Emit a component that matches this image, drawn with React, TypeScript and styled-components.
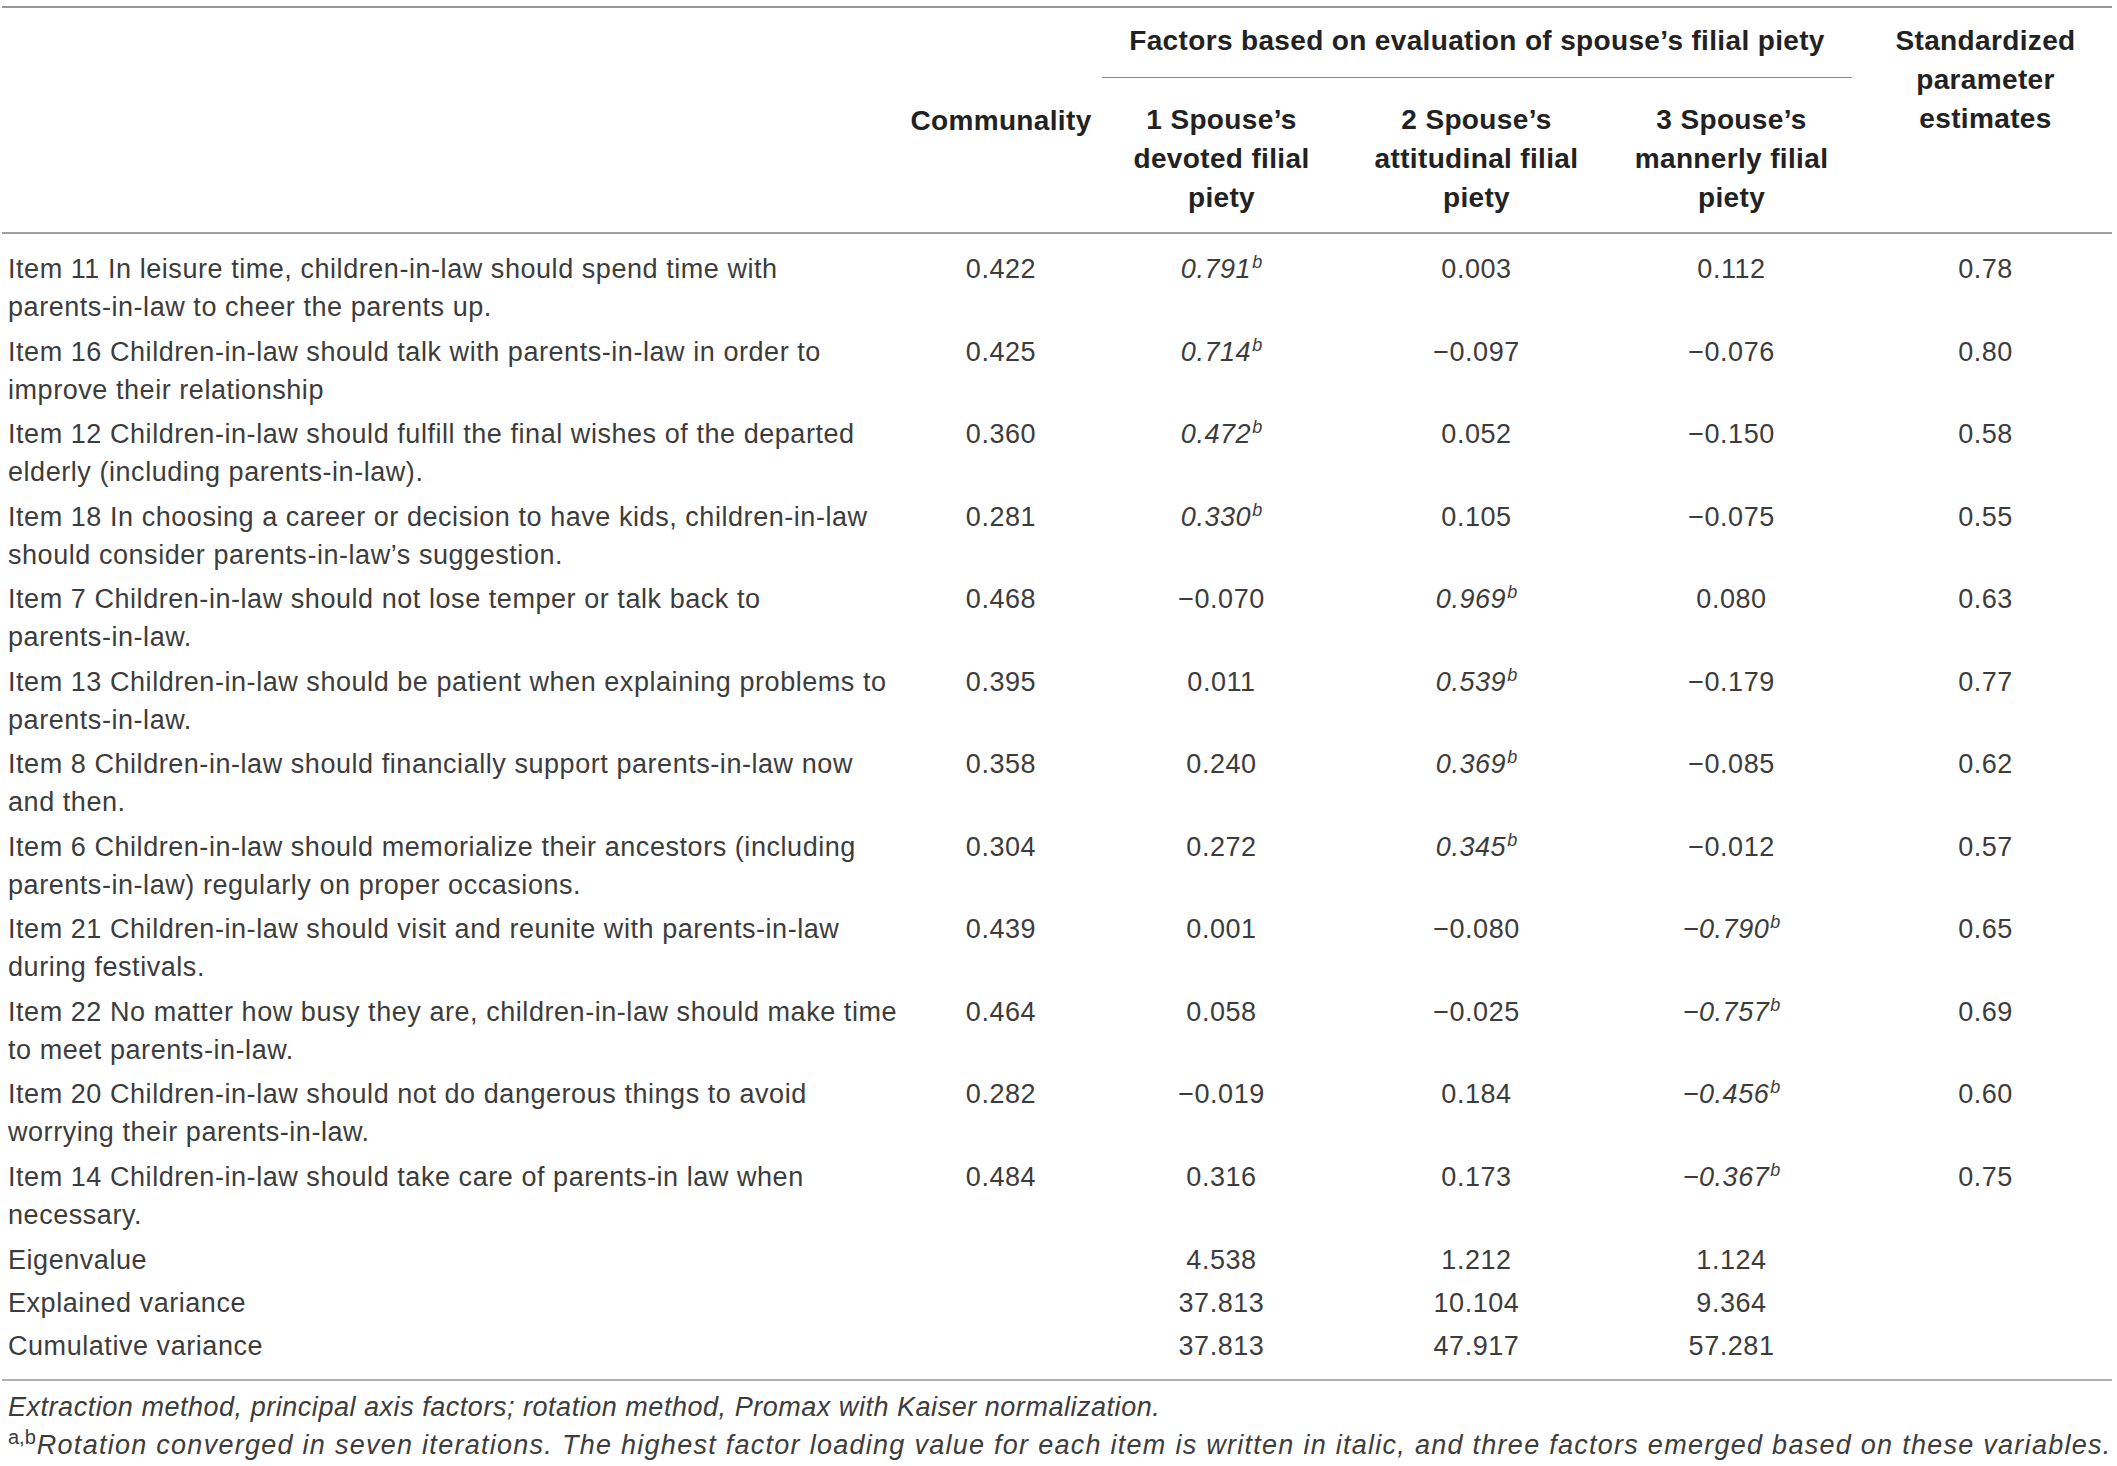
import React from "react";
import styled, { createGlobalStyle } from "styled-components";

const GlobalStyle = createGlobalStyle`
  html, body { margin: 0; padding: 0; background: #ffffff; }
  body {
    font-family: "Liberation Sans", Arial, Helvetica, sans-serif;
    color: #3c3c3c;
  }
`;

const Page = styled.div`
  width: 2110px;
  padding: 6px 0 0 2px;
`;

const Table = styled.table`
  width: 2110px;
  table-layout: fixed;
  border-collapse: collapse;
  border-top: 2px solid #959595;
  border-bottom: 2px solid #b0b0b0;
`;

const Col = styled.col<{ $w: number }>`
  width: ${(p) => p.$w}px;
`;

const Head = styled.thead`
  border-bottom: 2px solid #a0a0a0;
`;

const HeadCell = styled.th<{
  $pt: number;
  $pb: number;
  $valign?: "top" | "middle";
}>`
  font-family: "Liberation Sans", Arial, sans-serif;
  font-weight: 700;
  font-size: 28px;
  letter-spacing: 0.35px;
  line-height: 39px;
  color: #222222;
  text-align: center;
  vertical-align: ${(p) => p.$valign ?? "top"};
  padding: ${(p) => p.$pt}px 0 ${(p) => p.$pb}px;
  white-space: nowrap;
`;

const FactorsTitle = styled.div`
  margin: 0 7px 0 8px;
  padding-bottom: 17px;
  border-bottom: 1.5px solid #8a8a8a;
`;

const HeadLine = styled.span`
  display: block;
`;

const Row = styled.tr<{ $pt: number; $pb: number }>`
  & > td {
    padding-top: ${(p) => p.$pt}px;
    padding-bottom: ${(p) => p.$pb}px;
  }
`;

const ItemCell = styled.td`
  font-size: 27px;
  letter-spacing: 0.55px;
  line-height: 38px;
  text-align: left;
  vertical-align: top;
  padding-left: 6px;
  padding-right: 6px;
  color: #3c3c3c;
`;

const Word = styled.span`
  white-space: nowrap;
`;

const ValueCell = styled.td`
  font-size: 27px;
  letter-spacing: 0.55px;
  line-height: 38px;
  text-align: center;
  vertical-align: top;
  padding-left: 0;
  padding-right: 0;
  white-space: nowrap;
  color: #3c3c3c;
`;

const Em = styled.span`
  font-style: italic;
`;

const Sup = styled.span`
  font-style: italic;
  font-size: 18px;
  letter-spacing: 0;
  vertical-align: 10px;
  line-height: 0;
  margin-left: 1px;
`;

const Notes = styled.div`
  padding: 7px 3px 0 6px;
`;

const Note = styled.p<{ $spacing: number }>`
  margin: 0;
  font-style: italic;
  font-size: 27px;
  letter-spacing: ${(p) => p.$spacing}px;
  line-height: 38px;
  color: #3c3c3c;
  white-space: nowrap;
`;

const NoteMark = styled.span`
  font-style: normal;
  font-size: 20px;
  letter-spacing: 0;
  vertical-align: 10px;
  line-height: 0;
  margin-right: 1px;
`;

type Val = string | { v: string; hi: true };

interface ItemRow {
  text: string;
  comm: string;
  f: [Val, Val, Val];
  std: string;
}

const hi = (v: string): Val => ({ v, hi: true });

const items: ItemRow[] = [
  {
    text: "Item 11 In leisure time, children-in-law should spend time with parents-in-law to cheer the parents up.",
    comm: "0.422",
    f: [hi("0.791"), "0.003", "0.112"],
    std: "0.78",
  },
  {
    text: "Item 16 Children-in-law should talk with parents-in-law in order to improve their relationship",
    comm: "0.425",
    f: [hi("0.714"), "\u22120.097", "\u22120.076"],
    std: "0.80",
  },
  {
    text: "Item 12 Children-in-law should fulfill the final wishes of the departed elderly (including parents-in-law).",
    comm: "0.360",
    f: [hi("0.472"), "0.052", "\u22120.150"],
    std: "0.58",
  },
  {
    text: "Item 18 In choosing a career or decision to have kids, children-in-law should consider parents-in-law\u2019s suggestion.",
    comm: "0.281",
    f: [hi("0.330"), "0.105", "\u22120.075"],
    std: "0.55",
  },
  {
    text: "Item 7 Children-in-law should not lose temper or talk back to parents-in-law.",
    comm: "0.468",
    f: ["\u22120.070", hi("0.969"), "0.080"],
    std: "0.63",
  },
  {
    text: "Item 13 Children-in-law should be patient when explaining problems to parents-in-law.",
    comm: "0.395",
    f: ["0.011", hi("0.539"), "\u22120.179"],
    std: "0.77",
  },
  {
    text: "Item 8 Children-in-law should financially support parents-in-law now and then.",
    comm: "0.358",
    f: ["0.240", hi("0.369"), "\u22120.085"],
    std: "0.62",
  },
  {
    text: "Item 6 Children-in-law should memorialize their ancestors (including parents-in-law) regularly on proper occasions.",
    comm: "0.304",
    f: ["0.272", hi("0.345"), "\u22120.012"],
    std: "0.57",
  },
  {
    text: "Item 21 Children-in-law should visit and reunite with parents-in-law during festivals.",
    comm: "0.439",
    f: ["0.001", "\u22120.080", hi("\u22120.790")],
    std: "0.65",
  },
  {
    text: "Item 22 No matter how busy they are, children-in-law should make time to meet parents-in-law.",
    comm: "0.464",
    f: ["0.058", "\u22120.025", hi("\u22120.757")],
    std: "0.69",
  },
  {
    text: "Item 20 Children-in-law should not do dangerous things to avoid worrying their parents-in-law.",
    comm: "0.282",
    f: ["\u22120.019", "0.184", hi("\u22120.456")],
    std: "0.60",
  },
  {
    text: "Item 14 Children-in-law should take care of parents-in law when necessary.",
    comm: "0.484",
    f: ["0.316", "0.173", hi("\u22120.367")],
    std: "0.75",
  },
];

const summary: { label: string; f: [string, string, string] }[] = [
  { label: "Eigenvalue", f: ["4.538", "1.212", "1.124"] },
  { label: "Explained variance", f: ["37.813", "10.104", "9.364"] },
  { label: "Cumulative variance", f: ["37.813", "47.917", "57.281"] },
];

const renderText = (t: string) =>
  t.split(" ").map((w, i) => (
    <React.Fragment key={i}>
      {i > 0 ? " " : null}
      {w.includes("-") ? <Word>{w}</Word> : w}
    </React.Fragment>
  ));

const renderVal = (v: Val) =>
  typeof v === "string" ? (
    v
  ) : (
    <Em>
      {v.v}
      <Sup>b</Sup>
    </Em>
  );

const colWidths = [906, 186, 255, 255, 255, 253];

export default function App() {
  return (
    <>
      <GlobalStyle />
      <Page>
        <Table>
          <colgroup>
            {colWidths.map((w, i) => (
              <Col key={i} $w={w} />
            ))}
          </colgroup>
          <Head>
            <tr>
              <HeadCell rowSpan={2} $pt={0} $pb={0} />
              <HeadCell rowSpan={2} $pt={0} $pb={0} $valign="middle">
                Communality
              </HeadCell>
              <HeadCell colSpan={3} $pt={13} $pb={0}>
                <FactorsTitle>
                  Factors based on evaluation of spouse&rsquo;s filial piety
                </FactorsTitle>
              </HeadCell>
              <HeadCell rowSpan={2} $pt={13} $pb={0}>
                <HeadLine>Standardized</HeadLine>
                <HeadLine>parameter</HeadLine>
                <HeadLine>estimates</HeadLine>
              </HeadCell>
            </tr>
            <tr>
              <HeadCell $pt={22} $pb={15}>
                <HeadLine>1 Spouse&rsquo;s</HeadLine>
                <HeadLine>devoted filial</HeadLine>
                <HeadLine>piety</HeadLine>
              </HeadCell>
              <HeadCell $pt={22} $pb={15}>
                <HeadLine>2 Spouse&rsquo;s</HeadLine>
                <HeadLine>attitudinal filial</HeadLine>
                <HeadLine>piety</HeadLine>
              </HeadCell>
              <HeadCell $pt={22} $pb={15}>
                <HeadLine>3 Spouse&rsquo;s</HeadLine>
                <HeadLine>mannerly filial</HeadLine>
                <HeadLine>piety</HeadLine>
              </HeadCell>
            </tr>
          </Head>
          <tbody>
            {items.map((r, i) => (
              <Row key={r.text} $pt={i === 0 ? 16 : 3} $pb={3.5}>
                <ItemCell>{renderText(r.text)}</ItemCell>
                <ValueCell>{r.comm}</ValueCell>
                {r.f.map((v, j) => (
                  <ValueCell key={j}>{renderVal(v)}</ValueCell>
                ))}
                <ValueCell>{r.std}</ValueCell>
              </Row>
            ))}
            {summary.map((s, i) => (
              <Row
                key={s.label}
                $pt={3.5}
                $pb={i === summary.length - 1 ? 14 : 1.5}
              >
                <ItemCell>{s.label}</ItemCell>
                <ValueCell />
                {s.f.map((v, j) => (
                  <ValueCell key={j}>{v}</ValueCell>
                ))}
                <ValueCell />
              </Row>
            ))}
          </tbody>
        </Table>
        <Notes>
          <Note $spacing={0.53}>
            Extraction method, principal axis factors; rotation method, Promax
            with Kaiser normalization.
          </Note>
          <Note $spacing={1.27}>
            <NoteMark>a,b</NoteMark>
            Rotation converged in seven iterations. The highest factor loading
            value for each item is written in italic, and three factors emerged
            based on these variables.
          </Note>
        </Notes>
      </Page>
    </>
  );
}
